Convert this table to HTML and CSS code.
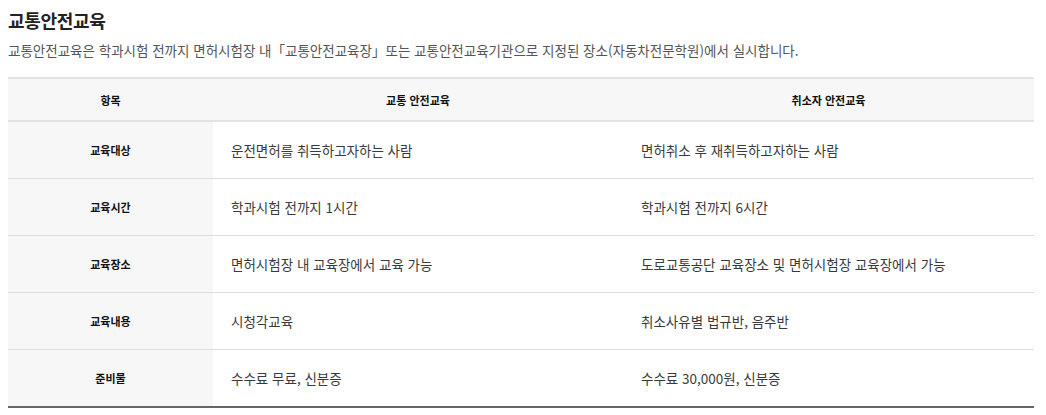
FILE: index.html
```html
<!DOCTYPE html>
<html lang="ko">
<head>
<meta charset="utf-8">
<link rel="stylesheet" href="styles.css">
</head>
<body>
<div class="page">
  <h2 class="title">교통안전교육</h2>
  <p class="desc">교통안전교육은 학과시험 전까지 면허시험장 내「교통안전교육장」또는 교통안전교육기관으로 지정된 장소(자동차전문학원)에서 실시합니다.</p>
  <table class="tbl">
    <colgroup>
      <col class="c1"><col class="c2"><col class="c3">
    </colgroup>
    <thead>
      <tr><th>항목</th><th>교통 안전교육</th><th>취소자 안전교육</th></tr>
    </thead>
    <tbody>
      <tr><th>교육대상</th><td>운전면허를 취득하고자하는 사람</td><td>면허취소 후 재취득하고자하는 사람</td></tr>
      <tr><th>교육시간</th><td>학과시험 전까지 1시간</td><td>학과시험 전까지 6시간</td></tr>
      <tr><th>교육장소</th><td>면허시험장 내 교육장에서 교육 가능</td><td>도로교통공단 교육장소 및 면허시험장 교육장에서 가능</td></tr>
      <tr><th>교육내용</th><td>시청각교육</td><td>취소사유별 법규반, 음주반</td></tr>
      <tr><th>준비물</th><td>수수료 무료, 신분증</td><td>수수료 30,000원, 신분증</td></tr>
    </tbody>
  </table>
</div>
</body>
</html>
```
FILE: styles.css
```css
html, body { margin: 0; padding: 0; background: #fff; }
body {
  font-family: "Noto Sans CJK KR", "Noto Sans", sans-serif;
  color: #333;
}
.page { padding: 0 12px 0 8px; }
.title {
  margin: 0;
  padding-top: 7px;
  font-size: 18px;
  line-height: 26px;
  font-weight: 700;
  color: #222;
  letter-spacing: -0.3px;
}
.desc {
  margin: 8px 0 0;
  font-size: 13.5px;
  line-height: 19px;
  color: #555;
}
.tbl {
  margin-top: 17px;
  width: 1026px;
  border-collapse: collapse;
  table-layout: fixed;
  border-top: 2px solid #e3e3e3;
  border-bottom: 2px solid #666;
}
.c1 { width: 205px; }
.c2 { width: 410px; }
.c3 { width: 411px; }
.tbl th, .tbl td {
  border-bottom: 1px solid #ddd;
  padding: 0;
}
.tbl thead th {
  height: 41px;
  background: #f7f7f7;
  font-size: 11px;
  font-weight: 700;
  color: #111;
  text-align: center;
  border-bottom: 2px solid #e3e3e3;
}
.tbl tbody th {
  height: 56px;
  background: #f7f7f7;
  font-size: 11px;
  font-weight: 700;
  color: #111;
  text-align: center;
}
.tbl tbody td {
  font-size: 13.5px;
  color: #3a3a3a;
  text-align: left;
  padding-left: 18px;
}
.tbl tbody tr:last-child th, .tbl tbody tr:last-child td { border-bottom: none; }
```
